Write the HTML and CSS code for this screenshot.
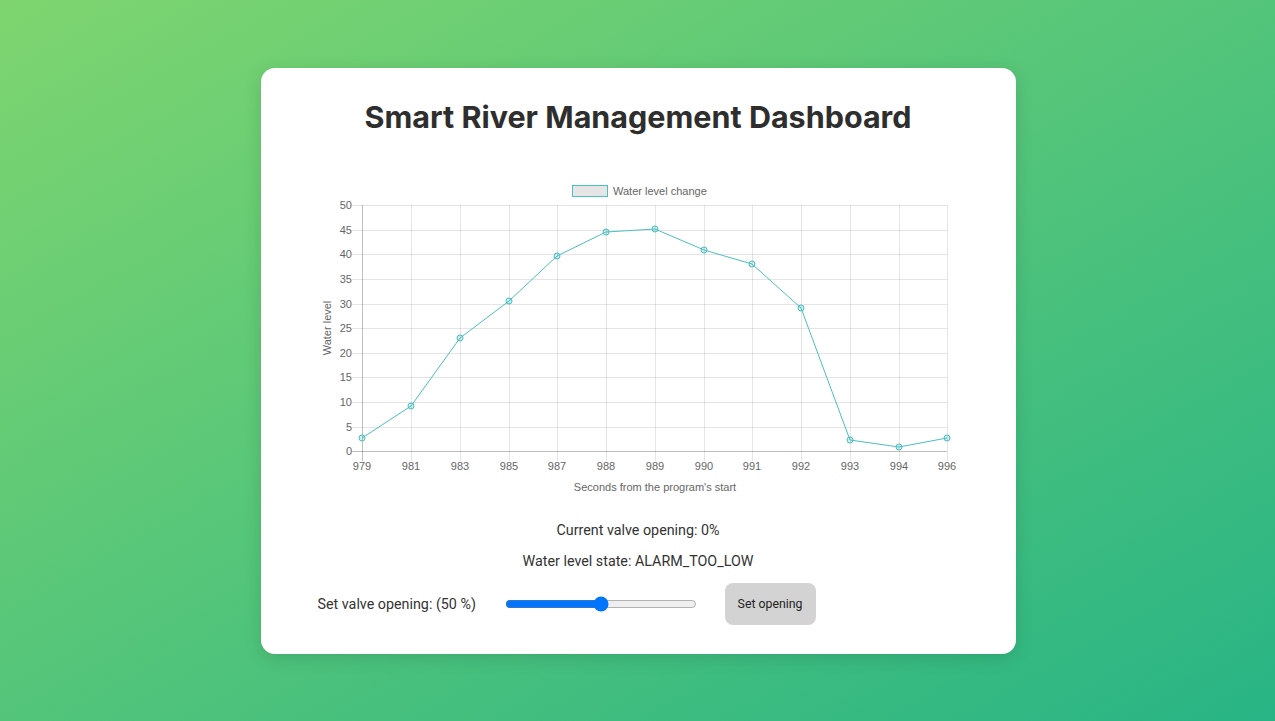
FILE: index.html
```html
<!DOCTYPE html>
<html lang="en">
<head>
<meta charset="utf-8">
<title>Smart River Management Dashboard</title>
<link rel="stylesheet" href="styles.css">
</head>
<body>
<main class="card">
  <h1 class="title">Smart River Management Dashboard</h1>
  <svg class="chart" width="660" height="330" viewBox="308 175 660 330" xmlns="http://www.w3.org/2000/svg">
    <!-- legend -->
    <rect x="572.5" y="185.5" width="35" height="11" fill="#e5e5e5" stroke="rgb(75,192,192)" stroke-width="1"/>
    <text class="lbl" x="613" y="194.5">Water level change</text>
    <!-- horizontal grid -->
    <g stroke="rgba(0,0,0,0.1)" stroke-width="1">
      <line x1="352" y1="205.5" x2="947" y2="205.5"/>
      <line x1="352" y1="230.5" x2="947" y2="230.5"/>
      <line x1="352" y1="254.5" x2="947" y2="254.5"/>
      <line x1="352" y1="279.5" x2="947" y2="279.5"/>
      <line x1="352" y1="304.5" x2="947" y2="304.5"/>
      <line x1="352" y1="328.5" x2="947" y2="328.5"/>
      <line x1="352" y1="353.5" x2="947" y2="353.5"/>
      <line x1="352" y1="377.5" x2="947" y2="377.5"/>
      <line x1="352" y1="402.5" x2="947" y2="402.5"/>
      <line x1="352" y1="427.5" x2="947" y2="427.5"/>
    </g>
    <!-- vertical grid -->
    <g stroke="rgba(0,0,0,0.1)" stroke-width="1">
      <line x1="411.5" y1="205" x2="411.5" y2="461"/>
      <line x1="460.5" y1="205" x2="460.5" y2="461"/>
      <line x1="509.5" y1="205" x2="509.5" y2="461"/>
      <line x1="557.5" y1="205" x2="557.5" y2="461"/>
      <line x1="606.5" y1="205" x2="606.5" y2="461"/>
      <line x1="655.5" y1="205" x2="655.5" y2="461"/>
      <line x1="704.5" y1="205" x2="704.5" y2="461"/>
      <line x1="752.5" y1="205" x2="752.5" y2="461"/>
      <line x1="801.5" y1="205" x2="801.5" y2="461"/>
      <line x1="850.5" y1="205" x2="850.5" y2="461"/>
      <line x1="899.5" y1="205" x2="899.5" y2="461"/>
      <line x1="947.5" y1="205" x2="947.5" y2="461"/>
    </g>
    <g stroke="rgba(0,0,0,0.25)" stroke-width="1">
      <line x1="352" y1="451.5" x2="947" y2="451.5"/>
      <line x1="362.5" y1="205" x2="362.5" y2="461"/>
    </g>
    <!-- y labels -->
    <g class="lbl" text-anchor="end">
      <text x="352" y="209">50</text>
      <text x="352" y="234">45</text>
      <text x="352" y="258">40</text>
      <text x="352" y="283">35</text>
      <text x="352" y="308">30</text>
      <text x="352" y="332">25</text>
      <text x="352" y="357">20</text>
      <text x="352" y="381">15</text>
      <text x="352" y="406">10</text>
      <text x="352" y="431">5</text>
      <text x="352" y="455">0</text>
    </g>
    <!-- x labels -->
    <g class="lbl" text-anchor="middle">
      <text x="362" y="470">979</text>
      <text x="411" y="470">981</text>
      <text x="460" y="470">983</text>
      <text x="509" y="470">985</text>
      <text x="557" y="470">987</text>
      <text x="606" y="470">988</text>
      <text x="655" y="470">989</text>
      <text x="704" y="470">990</text>
      <text x="752" y="470">991</text>
      <text x="801" y="470">992</text>
      <text x="850" y="470">993</text>
      <text x="899" y="470">994</text>
      <text x="947" y="470">996</text>
    </g>
    <text class="lbl" x="655" y="491" text-anchor="middle">Seconds from the program's start</text>
    <text class="lbl" x="0" y="0" text-anchor="middle" transform="translate(331 328) rotate(-90)">Water level</text>
    <!-- data line -->
    <polyline fill="none" stroke="rgb(75,192,192)" stroke-width="1" points="362,438 411,406 460,338 509,301 557,256 606,232 655,229 704,250 752,264 801,308 850,440 899,447 947,438"/>
    <g fill="rgba(75,192,192,0.25)" stroke="rgb(75,192,192)" stroke-width="1">
      <circle cx="362" cy="438" r="3"/>
      <circle cx="411" cy="406" r="3"/>
      <circle cx="460" cy="338" r="3"/>
      <circle cx="509" cy="301" r="3"/>
      <circle cx="557" cy="256" r="3"/>
      <circle cx="606" cy="232" r="3"/>
      <circle cx="655" cy="229" r="3"/>
      <circle cx="704" cy="250" r="3"/>
      <circle cx="752" cy="264" r="3"/>
      <circle cx="801" cy="308" r="3"/>
      <circle cx="850" cy="440" r="3"/>
      <circle cx="899" cy="447" r="3"/>
      <circle cx="947" cy="438" r="3"/>
    </g>
  </svg>
  <p class="info info-first">Current valve opening: 0%</p>
  <p class="info">Water level state: ALARM_TOO_LOW</p>
  <div class="controls">
    <label class="ctrl-label" for="valve">Set valve opening: (50 %)</label>
    <input class="slider" id="valve" type="range" min="0" max="100" value="50">
    <button class="btn" type="button">Set opening</button>
  </div>
</main>
</body>
</html>
```

FILE: styles.css
```css
html, body {
  margin: 0;
  padding: 0;
}

body {
  height: 100vh;
  display: flex;
  align-items: center;
  justify-content: center;
  background: linear-gradient(to right bottom, #7ed56f, #28b485);
  font-family: Roboto, "Liberation Sans", Arial, sans-serif;
  color: #333;
}

.card {
  box-sizing: border-box;
  width: 755px;
  height: 586px;
  margin-left: 1px;
  background: #fff;
  border-radius: 14px;
  box-shadow: 0 4px 18px rgba(0, 0, 0, 0.12);
  padding-top: 29px;
  display: flex;
  flex-direction: column;
  align-items: center;
}

.title {
  margin: 0;
  font-family: Inter, "Open Sans", sans-serif;
  font-weight: 700;
  font-size: 30.5px;
  line-height: 40px;
  color: #2e2e2e;
  letter-spacing: 0;
}

.chart {
  display: block;
  margin-top: 38px;
}

.lbl {
  font-family: "Liberation Sans", Arial, sans-serif;
  font-size: 11px;
  fill: #666;
}

.info {
  margin: 11px 0 0;
  font-size: 14.3px;
  line-height: 20px;
  color: #333;
}

.info-first {
  margin-top: 15px;
}

.controls {
  align-self: stretch;
  margin-top: 12px;
  padding-left: 57px;
  display: flex;
  align-items: center;
}

.ctrl-label {
  font-size: 14.3px;
  color: #333;
  width: 158px;
  white-space: nowrap;
}

.slider {
  width: 192px;
  margin: 0 0 0 29px;
}

.btn {
  margin-left: 28px;
  width: 91px;
  height: 42px;
  border: none;
  border-radius: 8px;
  background: #d3d3d3;
  color: #222;
  font-family: Roboto, "Liberation Sans", Arial, sans-serif;
  font-size: 12.3px;
  padding: 0;
}
```
